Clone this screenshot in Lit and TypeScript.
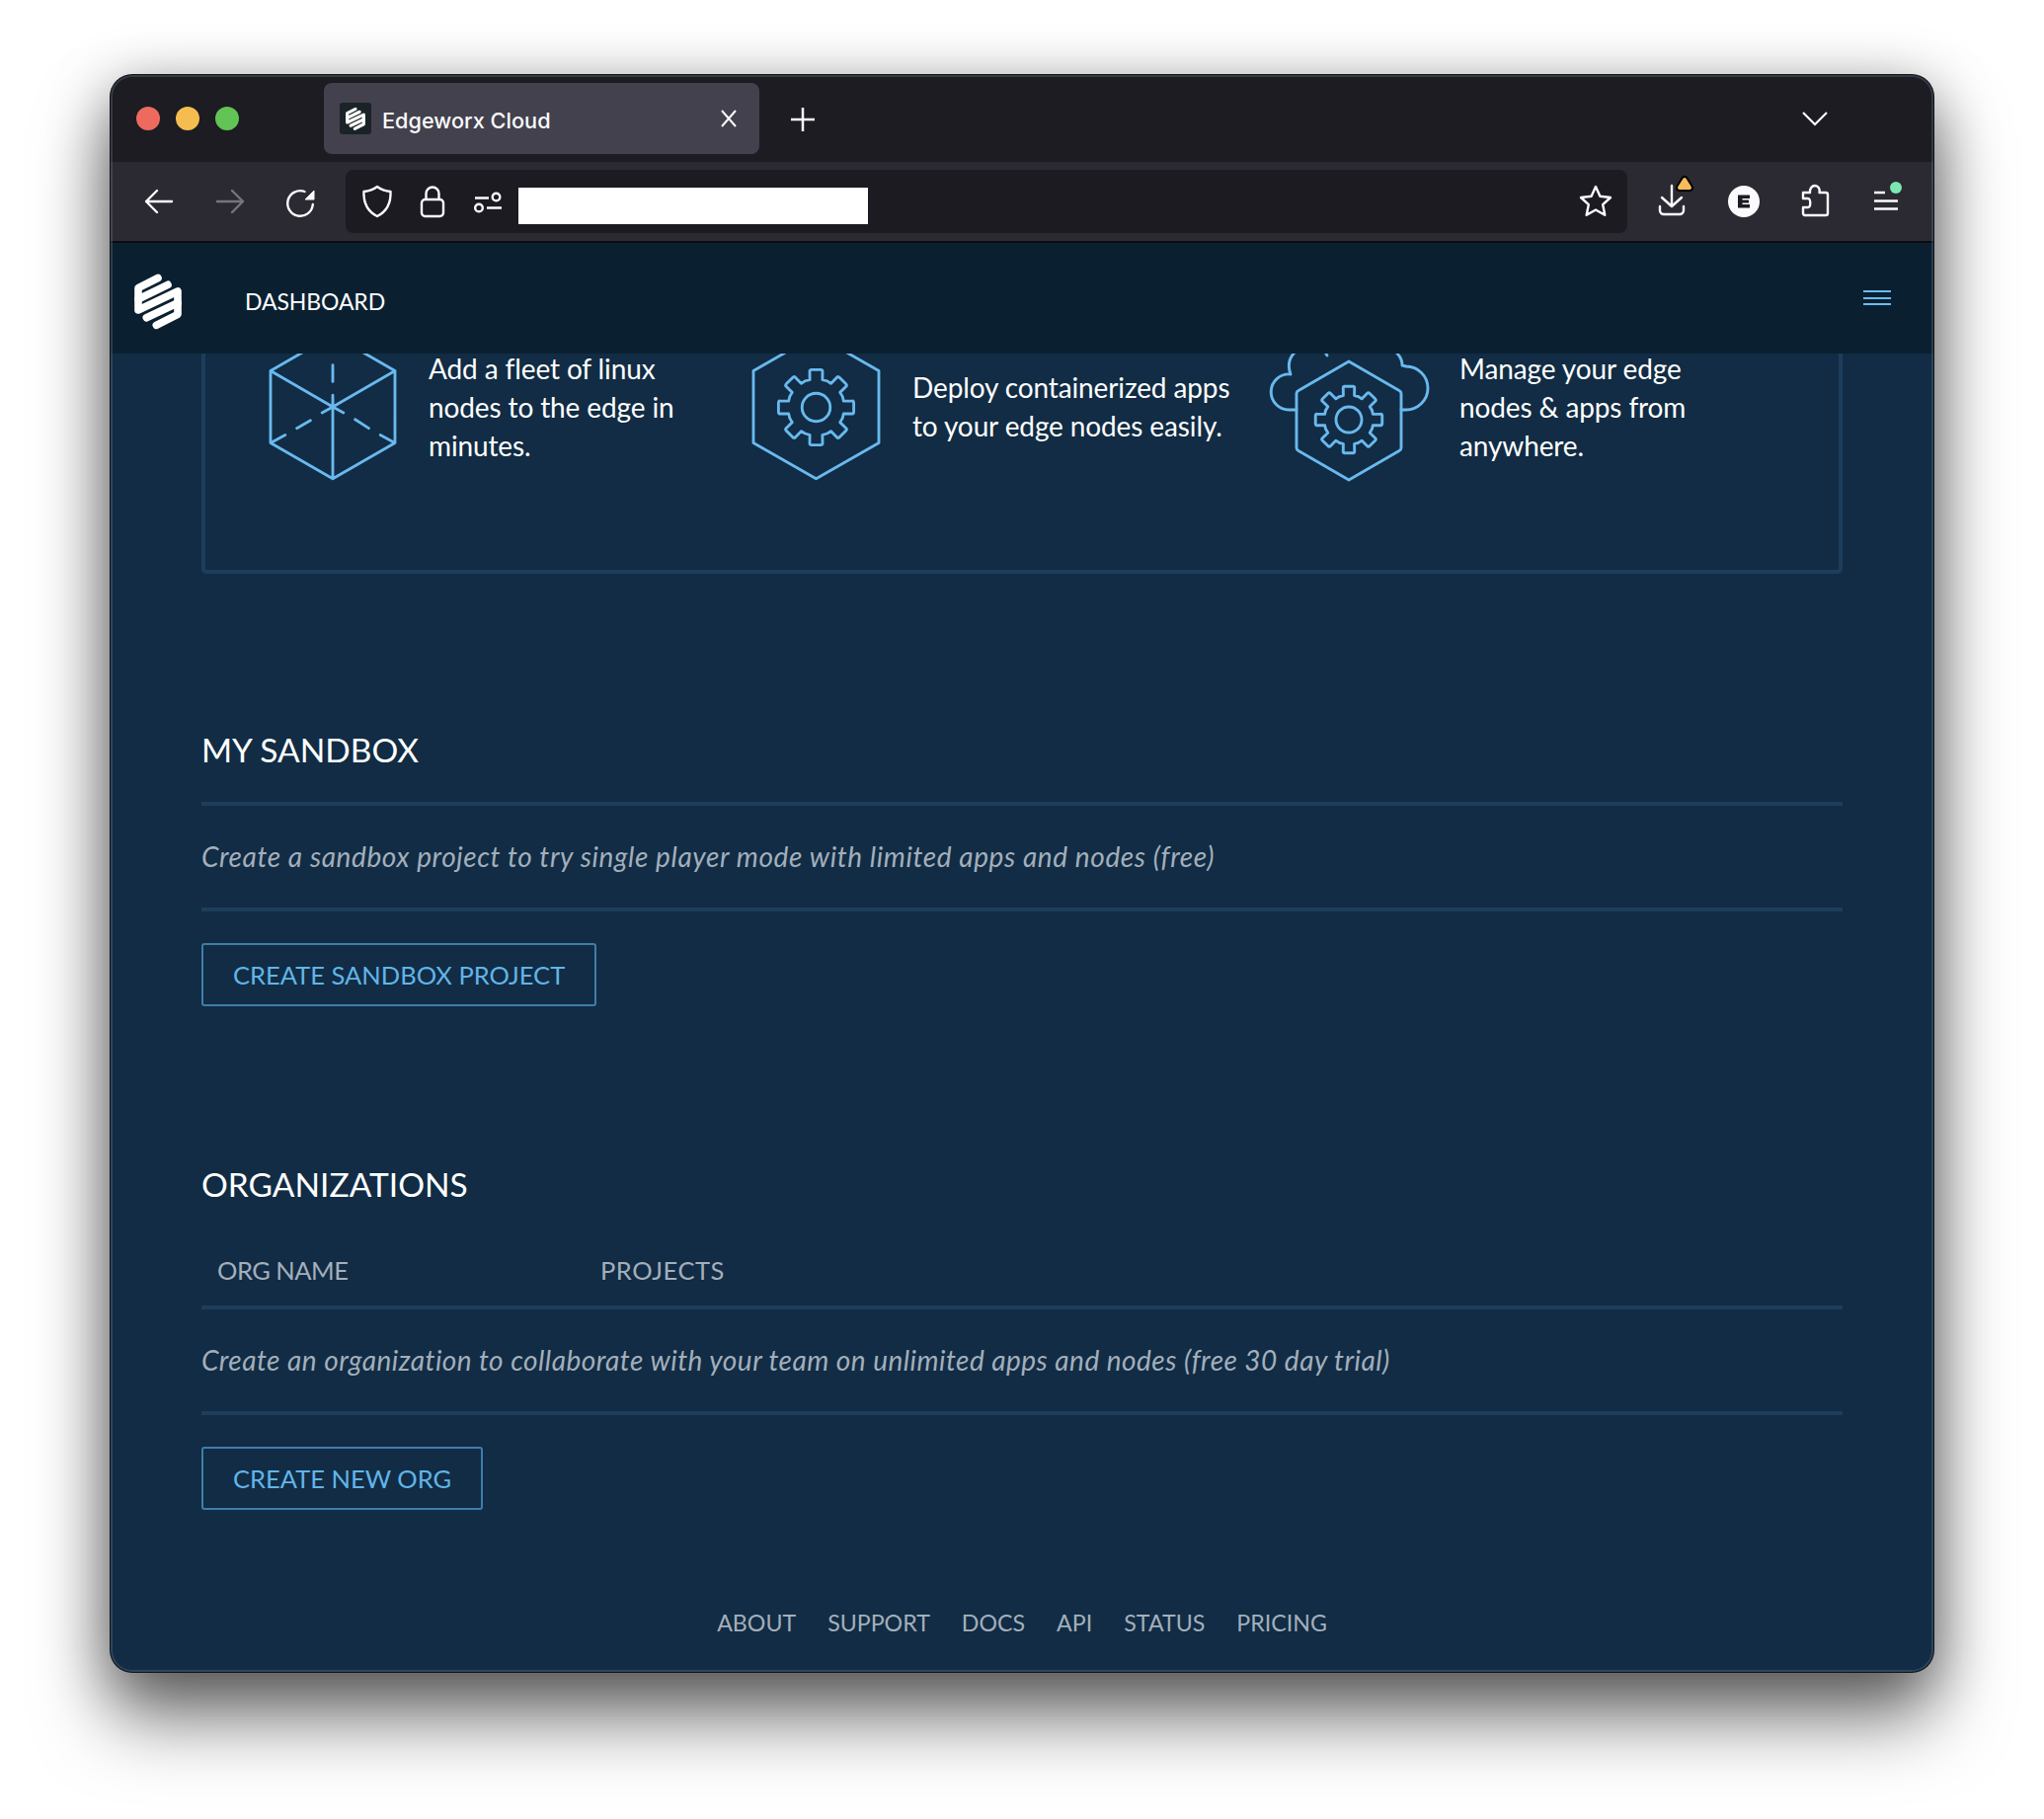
import { LitElement, html, css, svg } from "lit";
import { customElement } from "lit/decorators.js";

function gear(cx: number, cy: number, R: number, r: number) {
  const n = 8;
  const step = (Math.PI * 2) / n;
  const a = (deg: number) => (deg * Math.PI) / 180;
  let d = "";
  for (let i = 0; i < n; i++) {
    const c = -Math.PI / 2 + i * step;
    const p = (rad: number, off: number) =>
      `${(cx + rad * Math.cos(c + off)).toFixed(2)} ${(cy + rad * Math.sin(c + off)).toFixed(2)}`;
    d += (i === 0 ? "M" : `A${r * 0.55} ${r * 0.55} 0 0 1 `) + p(r, -a(13));
    d += "L" + p(R - 1, -a(10)) + "Q" + p(R, -a(10)) + " " + p(R, -a(7));
    d += "L" + p(R, a(7)) + "Q" + p(R, a(10)) + " " + p(R - 1, a(10));
    d += "L" + p(r, a(13));
  }
  const c0 = -Math.PI / 2 - a(13);
  return `${d}A${r * 0.55} ${r * 0.55} 0 0 1 ${(cx + r * Math.cos(c0)).toFixed(2)} ${(cy + r * Math.sin(c0)).toFixed(2)} Z`;
}

const cube = svg`<path d="M51 1 L115 38 V112 L51 149 L-13 112 V38 Z M-13 38 L51 75 L115 38 M51 75 V149 M51 32 V49 M51 63 V75 L40 81 M14 97 L28 89 M-11 111 L2 104 M51 75 L62 81 M74 88 L88 97 M100 104 L113 111" transform="translate(13 -1)"/>`;

@customElement("app-root")
export class AppRoot extends LitElement {
  static styles = css`
    :host { display: block; width: 2070px; height: 1842px; background: #fff; overflow: hidden; font-family: "Lato", "Liberation Sans", sans-serif; }
    .stage { padding: 76px 112px 0 112px; }
    .win { height: 1617px; border-radius: 22px; overflow: hidden; display: flex; flex-direction: column; background: #112c44;
      box-shadow: 0 0 0 1px #111, 0 48px 75px rgba(0,0,0,.5), 0 12px 60px rgba(0,0,0,.38); position: relative; }
    .win::after { content: ""; position: absolute; inset: 0; border-radius: 22px; border: 2px solid rgba(120,140,160,.28); pointer-events: none; z-index: 5; }
    .tabs { height: 88px; flex: none; background: #1c1c22; display: flex; align-items: flex-start; box-sizing: border-box; padding: 8px 0 0 216px; position: relative; }
    .lights { position: absolute; left: 26px; top: 32px; display: flex; gap: 16px; }
    .lights i { width: 24px; height: 24px; border-radius: 50%; display: block; }
    .tab { width: 441px; height: 72px; background: #42414d; border-radius: 8px; display: flex; align-items: center; padding: 0 22px 0 16px; box-sizing: border-box; color: #fbfbfe; font: 500 21.7px "Inter", sans-serif; }
    .fav { width: 32px; height: 32px; background: #1a2327; border-radius: 3px; display: flex; align-items: center; justify-content: center; margin-right: 11px; flex: none; }
    .tab span { flex: 1; position: relative; top: 2px; }
    .plus { margin: 25px 0 0 32px; }
    .chev { position: absolute; left: 1713px; top: 36px; }
    .bar { height: 80px; flex: none; background: #2b2a33; display: flex; align-items: center; box-sizing: border-box; position: relative; }
    .bar svg { display: block; flex: none; }
    .nav-icons { width: 238px; flex: none; position: relative; height: 100%; }
    .ni { position: absolute; overflow: visible; }
    .url { width: 1298px; height: 64px; flex: none; background: #1c1b22; border-radius: 8px; position: relative; display: flex; align-items: center; padding-left: 175px; box-sizing: border-box; }
    .mask { width: 354px; height: 37px; background: #fff; margin-top: 9px; }
    .line { height: 2px; flex: none; background: #0c0c0e; }
    .nav { height: 112px; flex: none; background: #0a2031; display: flex; align-items: center; position: relative; z-index: 2; padding: 5px 0 0 136px; box-sizing: border-box; color: #fff; }
    .logo { position: absolute; left: 24px; top: 32px; }
    .burger { position: absolute; left: 1775px; top: 48px; width: 28px; height: 15px; display: flex; flex-direction: column; justify-content: space-between; }
    .burger i { display: block; height: 2px; background: #6bbcf0; }
    .dash { font-size: 23px; letter-spacing: -0.1px; }
    .scroll { flex: 1; overflow: hidden; min-height: 0; color: #fff; position: relative; }
    .inner { margin-top: -26px; padding: 0 92px; display: flex; flex-direction: column; }
    .card { height: 249px; border: 4px solid #1d3d5c; border-top: none; border-radius: 0 0 5px 5px; box-sizing: border-box; position: relative; flex: none; }
    .f { position: absolute; display: flex; align-items: center; }
    .f svg { display: block; fill: none; stroke: #69b9ee; stroke-width: 2.9; stroke-linejoin: round; stroke-linecap: round; overflow: visible; flex: none; }
    .f p { margin: 0; font-size: 28px; line-height: 39px; letter-spacing: -0.12px; white-space: nowrap; }
    h2 { margin: 0; font-weight: 400; font-size: 33.5px; line-height: 40px; }
    .rule { height: 4px; background: #1d3d5c; flex: none; }
    .hint { font-style: italic; color: #a3afbc; font-size: 28px; line-height: 34px; letter-spacing: 0.6px; }
    .hint.b { letter-spacing: 0.48px; }
    .btn { align-self: flex-start; border: 2px solid #3f7dab; border-radius: 3px; box-sizing: border-box; height: 64px; display: flex; align-items: center; padding: 0 30px; color: #62b4e8; font-size: 25.5px; }
    .cols { display: flex; color: #a3afbc; font-size: 25.5px; line-height: 34px; padding-left: 16px; }
    .c1 { width: 388px; letter-spacing: -0.5px; }
    .c2 { letter-spacing: 0.55px; }
    .foot { display: flex; justify-content: center; gap: 32px; color: #a3afbc; font-size: 23.2px; line-height: 30px; }
  `;

  render() {
    const G1 = gear(0, 0, 39, 29);
    const G2 = gear(0, 0, 34, 25);
    return html`<div class="stage"><div class="win">
      <div class="tabs">
        <div class="lights"><i style="background:#ee6a5f"></i><i style="background:#f5bd4f"></i><i style="background:#61c454"></i></div>
        <div class="tab">
          <div class="fav">${this.logo(20, "#fff")}</div>
          <span>Edgeworx Cloud</span>
          <svg width="18" height="18" viewBox="0 0 18 18" fill="none" stroke="#fbfbfe" stroke-width="2"><path d="M2 1 L16 17 M16 1 L2 17"/></svg>
        </div>
        <svg class="plus" width="24" height="24" viewBox="0 0 24 24" fill="none" stroke="#fbfbfe" stroke-width="2.5"><path d="M12 0 V24 M0 12 H24"/></svg>
        <svg class="chev" width="26" height="16" viewBox="0 0 26 16" fill="none" stroke="#fbfbfe" stroke-width="2.2"><path d="M1 2 L13 14 L25 2"/></svg>
      </div>
      <div class="bar">
        <div class="nav-icons">
          <svg class="ni" style="left:34px;top:27px" width="30" height="26" viewBox="0 0 30 26" fill="none" stroke="#fbfbfe" stroke-width="2.4" stroke-linecap="round" stroke-linejoin="round"><path d="M2 13 H28 M13 2 L2 13 L13 24"/></svg>
          <svg class="ni" style="left:106px;top:27px" width="30" height="26" viewBox="0 0 30 26" fill="none" stroke="#76757b" stroke-width="2.4" stroke-linecap="round" stroke-linejoin="round"><path d="M2 13 H28 M17 2 L28 13 L17 24"/></svg>
          <svg class="ni" style="left:177px;top:26px" width="30" height="30" viewBox="0 0 30 30" fill="none"><path d="M19.5 4 A12.8 12.8 0 1 0 27.8 17" stroke="#fbfbfe" stroke-width="2.4" stroke-linecap="round"/><path d="M29 3 V12 H20 Z" fill="#fbfbfe" stroke="#fbfbfe" stroke-linejoin="round"/></svg>
        </div>
        <div class="url">
          <svg class="ni" style="left:16px;top:15px" width="32" height="34" viewBox="0 0 32 34" fill="none" stroke="#fbfbfe" stroke-width="2.4" stroke-linejoin="round"><path d="M16 2 C20 5 25 6.5 29.5 7 C30 18 26 27 16 32 C6 27 2 18 2.5 7 C7 6.5 12 5 16 2 Z"/></svg>
          <svg class="ni" style="left:75px;top:15px" width="26" height="34" viewBox="0 0 26 34" fill="none" stroke="#fbfbfe" stroke-width="2.4" stroke-linejoin="round"><path d="M6.5 15 V9 A6.5 6.5 0 0 1 19.5 9 V15"/><rect x="2" y="15" width="22" height="17" rx="3.5"/></svg>
          <svg class="ni" style="left:129px;top:22px" width="30" height="22" viewBox="0 0 30 22" fill="none" stroke="#fbfbfe" stroke-width="2.4"><path d="M2 6.5 H16 M14 16.5 H29"/><circle cx="23.5" cy="5.5" r="3.8"/><circle cx="6" cy="16.5" r="3.8"/></svg>
          <div class="mask"></div>
          <svg class="ni" style="left:1248px;top:14px" width="36" height="36" viewBox="0 0 36 36" fill="none" stroke="#fbfbfe" stroke-width="2.4" stroke-linejoin="round"><path d="M18 3 L22.4 12.8 L33 14 L25.2 21.2 L27.3 31.8 L18 26.5 L8.7 31.8 L10.8 21.2 L3 14 L13.6 12.8 Z"/></svg>
        </div>
        <svg class="ni" style="left:1566px;top:22px" width="30" height="34" viewBox="0 0 30 34" fill="none" stroke="#fbfbfe" stroke-width="2.4" stroke-linecap="round" stroke-linejoin="round"><path d="M15 2 V23 M5 14 L15 23 L25 14 M3 23 V27 A4 4 0 0 0 7 31 H23 A4 4 0 0 0 27 27 V23"/></svg>
        <svg class="ni" style="left:1580px;top:8px" width="28" height="28" viewBox="0 0 28 28" stroke-linejoin="round"><path d="M14 10 L19 18 H9 Z" fill="#000" stroke="#000" stroke-width="8"/><path d="M14 10 L19 18 H9 Z" fill="#f5bb5c" stroke="#f5bb5c" stroke-width="4"/></svg>
        <svg class="ni" style="left:1638px;top:24px" width="32" height="32" viewBox="0 0 32 32"><circle cx="16" cy="16" r="16" fill="#fbfbfe"/><path d="M10 9.5 H22 V13 H14.5 V14.6 H21 V17.6 H14.5 V19 H22 V22.5 H10 Z" fill="#1c1b22"/></svg>
        <svg class="ni" style="left:1712px;top:22px" width="30" height="34" viewBox="0 0 30 34" fill="none" stroke="#fbfbfe" stroke-width="2.4" stroke-linejoin="round"><path d="M2 9 H9 C8.5 5 11 2 14 2 C17 2 19.5 5 18.5 9 H25 Q27 9 27 11 V30 Q27 32 25 32 H4 Q2 32 2 30 V24 H7 C10 24 10 15 7 15 H2 Z"/></svg>
        <svg class="ni" style="left:1786px;top:20px" width="40" height="32" viewBox="0 0 40 32"><path d="M0 11 H11 M0 19.5 H24 M0 27.5 H24" stroke="#fbfbfe" stroke-width="2.4" fill="none"/><circle cx="22" cy="6" r="6" fill="#7be8b0"/></svg>
      </div>
      <div class="line"></div>
      <div class="nav">
        <div class="logo">${this.logo(48, "#fff")}</div>
        <div class="dash">DASHBOARD</div>
        <div class="burger"><i></i><i></i><i></i></div>
      </div>
      <div class="scroll"><div class="inner">
        <div class="card">
          <div class="f" style="left:66px;top:7px">
            <svg width="126" height="146" viewBox="0 0 128 148">${cube}</svg>
            <p style="margin-left:34px">Add a fleet of linux<br>nodes to the edge in<br>minutes.</p>
          </div>
          <div class="f" style="left:555px;top:7px">
            <svg width="127" height="146" viewBox="0 0 129 148"><path d="M64.5 0 L129 37 V111 L64.5 148 L0 111 V37 Z"/><g transform="translate(64.5 74.5)"><path d="${G1}"/><circle r="14.5"/></g></svg>
            <p style="margin-left:34px">Deploy containerized apps<br>to your edge nodes easily.</p>
          </div>
          <div class="f" style="left:1078px;top:6px">
            <svg width="160" height="148" viewBox="0 0 160 148"><path d="M27 77 H20 A18.05 18.05 0 1 1 21 41 C18 33 19 26 24 20 L40 8 M133 77 H138 A22 22 0 0 0 138 33 L134 32 C134 27 132 23 129 20 M55 17 L58 22"/><path d="M80 28 L131 57.5 Q133 58.5 133 60.5 V115.5 Q133 117.5 131 118.5 L80 148 L29 118.5 Q27 117.5 27 115.5 V60.5 Q27 58.5 29 57.5 Z"/><g transform="translate(80 87)"><path d="${G2}"/><circle r="13"/></g></svg>
            <p style="margin-left:32px">Manage your edge<br>nodes &amp; apps from<br>anywhere.</p>
          </div>
        </div>
        <h2 style="margin-top:158px">MY SANDBOX</h2>
        <div class="rule" style="margin-top:33px"></div>
        <div class="hint" style="margin-top:34px">Create a sandbox project to try single player mode with limited apps and nodes (free)</div>
        <div class="rule" style="margin-top:35px"></div>
        <div class="btn" style="margin-top:32px">CREATE SANDBOX PROJECT</div>
        <h2 style="margin-top:160px">ORGANIZATIONS</h2>
        <div class="cols" style="margin-top:50px"><span class="c1">ORG NAME</span><span class="c2">PROJECTS</span></div>
        <div class="rule" style="margin-top:19px"></div>
        <div class="hint b" style="margin-top:34px">Create an organization to collaborate with your team on unlimited apps and nodes (free 30 day trial)</div>
        <div class="rule" style="margin-top:35px"></div>
        <div class="btn" style="margin-top:32px">CREATE NEW ORG</div>
        <div class="foot" style="margin-top:99px"><span>ABOUT</span><span>SUPPORT</span><span>DOCS</span><span>API</span><span>STATUS</span><span>PRICING</span></div>
      </div></div>
    </div></div>`;
  }

  logo(w: number, fill: string) {
    return html`<svg width="${w}" height="${(w * 55) / 48}" viewBox="11 8 48 55" style="display:block;overflow:visible"><g fill="none" stroke="${fill}" stroke-width="7.6" stroke-linecap="round" stroke-linejoin="round"><path d="M35 11.5 L15 21.7 V44 L55 25 V48.3 L33.3 59.3"/><path d="M15 33 L45 18.3"/><path d="M23.3 51.7 L55 36.7"/></g></svg>`;
  }
}
